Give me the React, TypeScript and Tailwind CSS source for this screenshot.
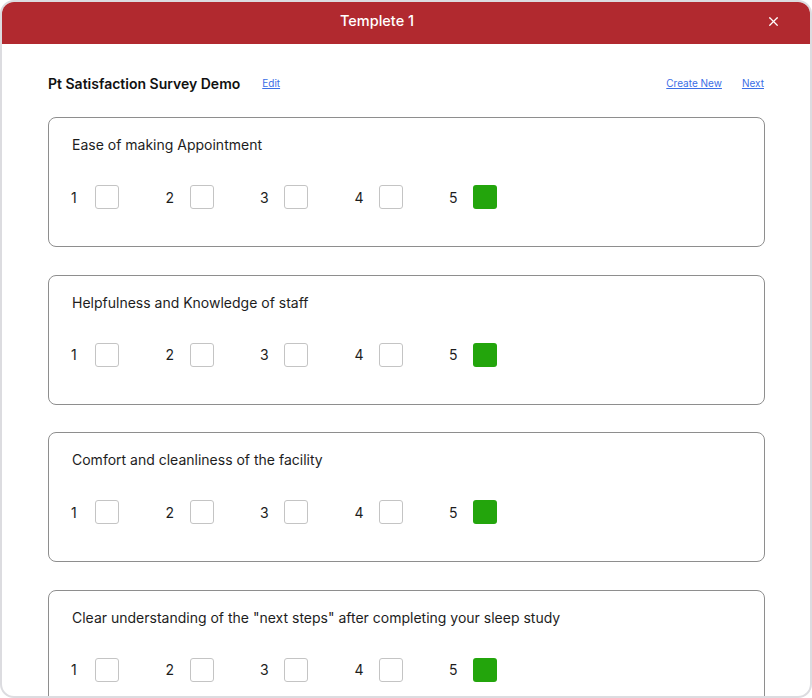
import React from 'react';
import { X } from 'lucide-react';

const questions = [
  'Ease of making Appointment',
  'Helpfulness and Knowledge of staff',
  'Comfort and cleanliness of the facility',
  'Clear understanding of the "next steps" after completing your sleep study',
];

const QuestionCard: React.FC<{ title: string }> = ({ title }) => (
  <div className="border border-[#8e8e8e] rounded-[8px] h-[130px] shrink-0 pl-[23px] pt-[17px]">
    <p className="text-[14px] leading-[20px] text-[#1d1d1d]">{title}</p>
    <div className="flex mt-[30px]">
      {[1, 2, 3, 4, 5].map((n) => (
        <div key={n} className="flex items-center w-[94.5px] shrink-0">
          <span className="w-[23px] text-[14px] text-[#1d1d1d] -ml-[1px]">{n}</span>
          <span
            className={
              n === 5
                ? 'w-6 h-6 rounded-[3px] bg-[#23a50c] ml-[1px]'
                : 'w-6 h-6 rounded-[3px] border border-[#c4c4c4] bg-white ml-[1px]'
            }
          />
        </div>
      ))}
    </div>
  </div>
);

const App: React.FC = () => {
  return (
    <div
      className="w-[812px] h-[698px] bg-white"
      style={{ fontFamily: 'Inter, "Open Sans", sans-serif' }}
    >
      <div className="h-full border-2 border-[#dcdce0] rounded-[14px] overflow-hidden flex flex-col">
        <header className="h-[42px] shrink-0 bg-[#b1292f] flex items-center text-white pb-[4px]">
          <div className="flex-1 text-center text-[14.5px] font-medium pl-[16px]">Templete 1</div>
          <button className="w-[74px] flex justify-center">
            <X size={15} strokeWidth={2} />
          </button>
        </header>
        <div className="flex-1 overflow-hidden pl-[46px] pr-[45px]">
          <div className="flex items-center h-[30px] mt-[24px] mb-[19px]">
            <h1 className="text-[14px] font-semibold text-[#111]">Pt Satisfaction Survey Demo</h1>
            <a className="ml-[22px] text-[10px] text-[#3b6ee6] underline">Edit</a>
            <a className="ml-auto text-[10px] text-[#3b6ee6] underline">Create New</a>
            <a className="ml-[20px] mr-[1px] text-[10px] text-[#3b6ee6] underline">Next</a>
          </div>
          <div className="flex flex-col gap-[27.5px]">
            {questions.map((q) => (
              <QuestionCard key={q} title={q} />
            ))}
          </div>
        </div>
      </div>
    </div>
  );
};

export default App;
